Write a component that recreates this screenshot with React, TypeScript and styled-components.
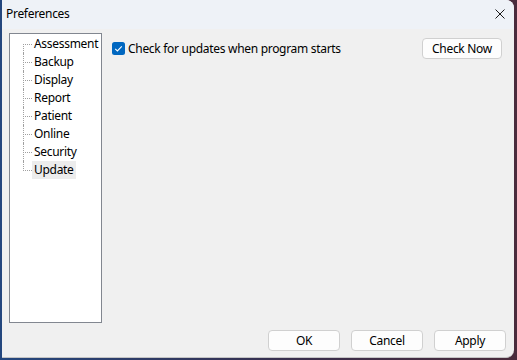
import React from "react";
import styled, { createGlobalStyle } from "styled-components";

const GlobalStyle = createGlobalStyle`
    html, body {
        margin: 0;
        padding: 0;
        width: 517px;
        height: 360px;
        overflow: hidden;
        background: linear-gradient(90deg, #24477e 0%, #3a2d4a 60%, #4a2b3c 100%);
    }
    body {
        font-family: "Noto Sans", "Segoe UI", sans-serif;
        font-size: 12px;
        letter-spacing: -0.3px;
        color: #000;
    }
`;

const pages = ["Assessment", "Backup", "Display", "Report", "Patient", "Online", "Security", "Update"];

export default function App() {
    return (
        <>
            <GlobalStyle />
            <Window>
                <TitleBar>
                    <Title>Preferences</Title>
                    <CloseButton>
                        <svg width="10" height="10" viewBox="0 0 10 10">
                            <path d="M0.5 0.5 L9.5 9.5 M9.5 0.5 L0.5 9.5" stroke="#1a1a1a" strokeWidth="1" />
                        </svg>
                    </CloseButton>
                </TitleBar>
                <Body>
                    <Main>
                        <Tree>
                            {pages.map((p, i) => (
                                <TreeItem key={p} first={i === 0} last={i === pages.length - 1}>
                                    <ItemLabel selected={p === "Update"}>{p}</ItemLabel>
                                </TreeItem>
                            ))}
                        </Tree>
                        <Pane>
                            <CheckRow>
                                <CheckBox>
                                    <svg width="13" height="13" viewBox="0 0 13 13">
                                        <rect x="0" y="0" width="13" height="13" rx="2.5" fill="#0067c0" />
                                        <path d="M3.2 6.8 L5.4 8.9 L9.8 4.4" fill="none" stroke="#fff" strokeWidth="1.1" />
                                    </svg>
                                </CheckBox>
                                Check for updates when program starts
                            </CheckRow>
                            <Button width={80}>Check Now</Button>
                        </Pane>
                    </Main>
                    <Footer>
                        <Button width={72}>OK</Button>
                        <Button width={72}>Cancel</Button>
                        <Button width={72}>Apply</Button>
                    </Footer>
                </Body>
            </Window>
        </>
    );
}

const Window = styled.div`
    margin-left: 2px;
    width: 512px;
    height: 358px;
    display: flex;
    flex-direction: column;
    background: #f0f0f0;
    border-bottom: 1px solid #c4c4c4;
    border-radius: 0 8px 8px 0;
    overflow: hidden;
    box-sizing: border-box;
`;

const TitleBar = styled.div`
    height: 29px;
    display: flex;
    align-items: center;
    justify-content: space-between;
    background: #eef2f7;
    padding-left: 4px;
`;

const Title = styled.span`
    font-size: 12px;
    margin-top: -2px;
`;

const CloseButton = styled.div`
    width: 28px;
    height: 29px;
    display: flex;
    align-items: center;
    justify-content: center;
    margin-top: -2px;
`;

const Body = styled.div`
    flex: 1;
    display: flex;
    flex-direction: column;
    padding: 4px 8px 6px 7px;
`;

const Main = styled.div`
    display: flex;
    gap: 10px;
`;

const Tree = styled.ul`
    width: 93px;
    height: 290px;
    box-sizing: border-box;
    margin: 0;
    padding: 1px 0 0 0;
    list-style: none;
    background: #fff;
    border: 1px solid #828790;
`;

const TreeItem = styled.li<{ first?: boolean; last?: boolean }>`
    position: relative;
    height: 18px;
    display: flex;
    align-items: center;
    padding-left: 22px;

    &::before {
        content: "";
        position: absolute;
        left: 13px;
        top: 9px;
        width: 9px;
        border-top: 1px dotted #a0a0a0;
    }

    &::after {
        content: "";
        position: absolute;
        left: 13px;
        top: ${(p) => (p.first ? "9px" : "0")};
        height: ${(p) => (p.first ? "9px" : p.last ? "10px" : "18px")};
        border-left: 1px dotted #a0a0a0;
    }
`;

const ItemLabel = styled.span<{ selected?: boolean }>`
    padding: 0 2px;
    line-height: 18px;
    background: ${(p) => (p.selected ? "#ececec" : "transparent")};
`;

const Pane = styled.div`
    flex: 1;
    display: flex;
    justify-content: space-between;
    align-items: flex-start;
    padding-top: 5px;
    padding-right: 4px;
`;

const CheckRow = styled.label`
    display: flex;
    align-items: center;
    gap: 3px;
    height: 21px;
`;

const CheckBox = styled.span`
    display: flex;
    width: 13px;
    height: 13px;
`;

const Footer = styled.div`
    margin-top: auto;
    display: flex;
    justify-content: flex-end;
    gap: 11px;
`;

const Button = styled.button<{ width: number }>`
    width: ${(p) => p.width}px;
    height: 21px;
    box-sizing: border-box;
    background: #fdfdfd;
    border: 1px solid #d0d0d0;
    border-radius: 4px;
    font-family: "Noto Sans", "Segoe UI", sans-serif;
    font-size: 12px;
    letter-spacing: -0.3px;
    color: #000;
    padding: 0;
    line-height: 19px;
`;
